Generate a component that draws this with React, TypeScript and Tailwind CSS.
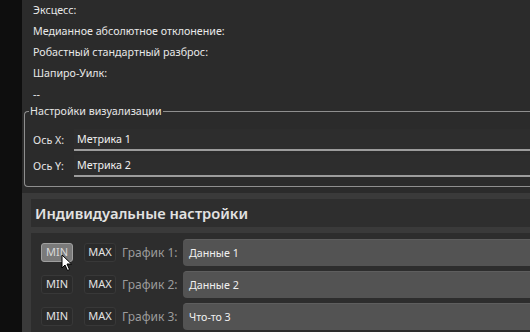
import React from 'react';

const stats = ['Эксцесс:', 'Медианное абсолютное отклонение:', 'Робастный стандартный разброс:', 'Шапиро-Уилк:', '--'];

const axes = [
  { label: 'Ось X:', value: 'Метрика 1' },
  { label: 'Ось Y:', value: 'Метрика 2' },
];

const charts = [
  { label: 'График 1:', value: 'Данные 1', hover: true },
  { label: 'График 2:', value: 'Данные 2', hover: false },
  { label: 'График 3:', value: 'Что-то 3', hover: false },
];

function Cursor() {
  return (
    <svg width="12" height="18" viewBox="0 0 12 18" className="absolute left-[19px] top-[10px]">
      <path d="M1 1 L1 14 L4 11 L6.5 16.5 L8.5 15.5 L6 10 L10.5 10 Z" fill="#fff" stroke="#000" strokeWidth="1" strokeLinejoin="round" />
    </svg>
  );
}

function SmallButton({ text, hover }: { text: string; hover?: boolean }) {
  return (
    <div
      className={
        'relative w-[32px] h-[19px] flex items-center justify-center rounded-[3px] text-[11px] border ' +
        (hover ? 'bg-[#7a7a7a] border-[#a0a0a0] text-[#d8d8d8]' : 'bg-[#2a2a2a] border-[#383838] text-[#e4e4e4]')
      }
    >
      {text}
      {hover && <Cursor />}
    </div>
  );
}

export default function App() {
  return (
    <div className="w-[530px] h-[332px] overflow-hidden flex bg-[#101010] text-[#e8e8e8]" style={{ fontFamily: '"Noto Sans", "Open Sans", sans-serif' }}>
      <div className="w-[22px] shrink-0 bg-[#0e0e0e]" />
      <div className="flex-1 bg-[#2b2b2b] flex flex-col min-w-0">
        <div className="pl-[11px] flex flex-col">
          {stats.map((s) => (
            <div key={s} className="h-[21px] flex items-center text-[10.7px] leading-none">{s}</div>
          ))}
        </div>

        <div className="relative mt-[6px] ml-[2px] h-[76px] shrink-0 border border-[#8f8f8f] border-r-0 rounded-l-[4px] flex flex-col pt-[15px] pl-[8px]">
          <div className="absolute -top-[8px] left-[4px] px-[1px] bg-[#2b2b2b] text-[10.7px] leading-[14px] text-[#e6e6e6]">Настройки визуализации</div>
          {axes.map((a) => (
            <div key={a.label} className="h-[26px] flex items-center">
              <div className="w-[41px] text-[10.7px] text-[#e6e6e6]">{a.label}</div>
              <div className="flex-1 h-[22px] flex items-center pl-[3px] border-b-2 border-[#9c9c9c] text-[10.7px] text-[#f0f0f0] bg-[#2d2d2d]">
                {a.value}
              </div>
            </div>
          ))}
        </div>

        <div className="mt-[6px] flex-1 bg-[#3a3a3a] pt-[6px] pl-[9px]">
          <div className="h-[28px] bg-[#2e2e2e] flex items-center pl-[4px] text-[14.7px] font-semibold text-[#e2e2e2]">
            Индивидуальные настройки
          </div>
          <div className="mt-[6px] bg-[#2d2d2d] pt-[6px] pl-[10px] flex flex-col gap-[5px] h-[120px]">
            {charts.map((c) => (
              <div key={c.label} className="h-[27px] flex items-center">
                <SmallButton text="MIN" hover={c.hover} />
                <div className="w-[11px]" />
                <SmallButton text="MAX" />
                <div className="w-[67px] pl-[6px] text-[12px] text-[#9c9c9c] whitespace-nowrap">{c.label}</div>
                <div className="flex-1 h-[27px] bg-[#535353] border-t border-[#5e5e5e] rounded-l-[4px] flex items-center pl-[6px] text-[10.7px] text-[#f0f0f0]">
                  {c.value}
                </div>
              </div>
            ))}
          </div>
        </div>
      </div>
    </div>
  );
}
